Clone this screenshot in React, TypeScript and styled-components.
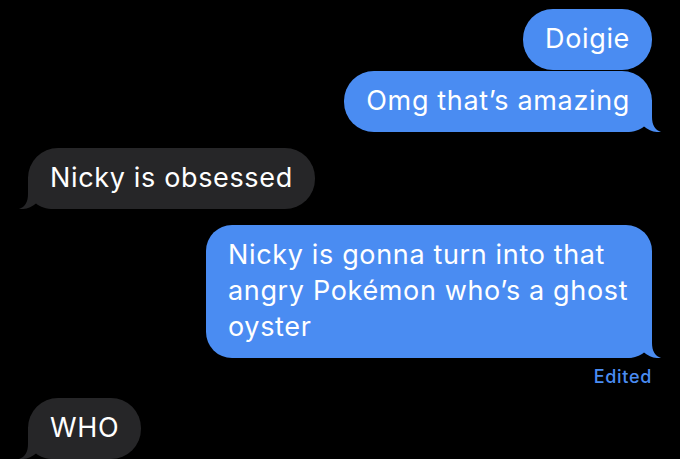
import React from "react";
import styled, { createGlobalStyle, css } from "styled-components";

const Global = createGlobalStyle`
  html, body { margin: 0; padding: 0; background: #000; }
  body { width: 680px; height: 459px; overflow: hidden; }
`;

const BLUE = "#4a8cf2";
const GRAY = "#262628";

const Thread = styled.div`
  display: flex;
  flex-direction: column;
  padding: 9px 28px 0 28px;
  font-family: Inter, "Liberation Sans", sans-serif;
  background: #000;
  height: 459px;
  box-sizing: border-box;
`;

const Row = styled.div<{ $mine: boolean; $gap: number }>`
  display: flex;
  justify-content: ${(p) => (p.$mine ? "flex-end" : "flex-start")};
  margin-top: ${(p) => p.$gap}px;
`;

const Bubble = styled.div<{ $mine: boolean; $maxWidth?: number }>`
  position: relative;
  box-sizing: border-box;
  padding: 12px 22px 13px;
  border-radius: 30px;
  font-size: 27px;
  line-height: 36px;
  letter-spacing: 0.65px;
  color: #fff;
  background: ${(p) => (p.$mine ? BLUE : GRAY)};
  ${(p) =>
    p.$maxWidth &&
    css`
      max-width: ${p.$maxWidth}px;
      border-radius: 26px;
    `}
`;

const Text = styled.span`
  position: relative;
  z-index: 1;
`;

const TailSvg = styled.svg<{ $mine: boolean }>`
  position: absolute;
  bottom: 0;
  width: 42px;
  height: 32px;
  z-index: 0;
  ${(p) =>
    p.$mine
      ? css`
          right: -10px;
        `
      : css`
          left: -10px;
          transform: scaleX(-1);
        `}
`;

const Edited = styled.div`
  display: flex;
  justify-content: flex-end;
  margin-top: 9px;
  font-size: 18px;
  line-height: 20px;
  letter-spacing: 0.7px;
  font-weight: 500;
  color: ${BLUE};
`;

const Tail = ({ mine }: { mine: boolean }) => (
  <TailSvg $mine={mine} viewBox="0 0 42 32">
    <path
      d="M0 32 L0 0 L32 0 L32 17 C32 25 35 30 41 32 C35 32.6 28.5 30.5 24 26.5 C20 30 14 32 6 32 Z"
      fill={mine ? BLUE : GRAY}
    />
  </TailSvg>
);

type Msg = { text: string; mine: boolean; gap: number; tail: boolean; maxWidth?: number };

const messages: Msg[] = [
  { text: "Doigie", mine: true, gap: 0, tail: false },
  { text: "Omg that\u2019s amazing", mine: true, gap: 1, tail: true },
  { text: "Nicky is obsessed", mine: false, gap: 16, tail: true },
  {
    text: "Nicky is gonna turn into that angry Pok\u00e9mon who\u2019s a ghost oyster",
    mine: true,
    gap: 16,
    tail: true,
    maxWidth: 446,
  },
];

export default function App() {
  return (
    <>
      <Global />
      <Thread>
        {messages.map((m, i) => (
          <Row key={i} $mine={m.mine} $gap={m.gap}>
            <Bubble $mine={m.mine} $maxWidth={m.maxWidth}>
              <Text>{m.text}</Text>
              {m.tail && <Tail mine={m.mine} />}
            </Bubble>
          </Row>
        ))}
        <Edited>Edited</Edited>
        <Row $mine={false} $gap={11}>
          <Bubble $mine={false}>
            <Text>WHO</Text>
            <Tail mine={false} />
          </Bubble>
        </Row>
      </Thread>
    </>
  );
}
